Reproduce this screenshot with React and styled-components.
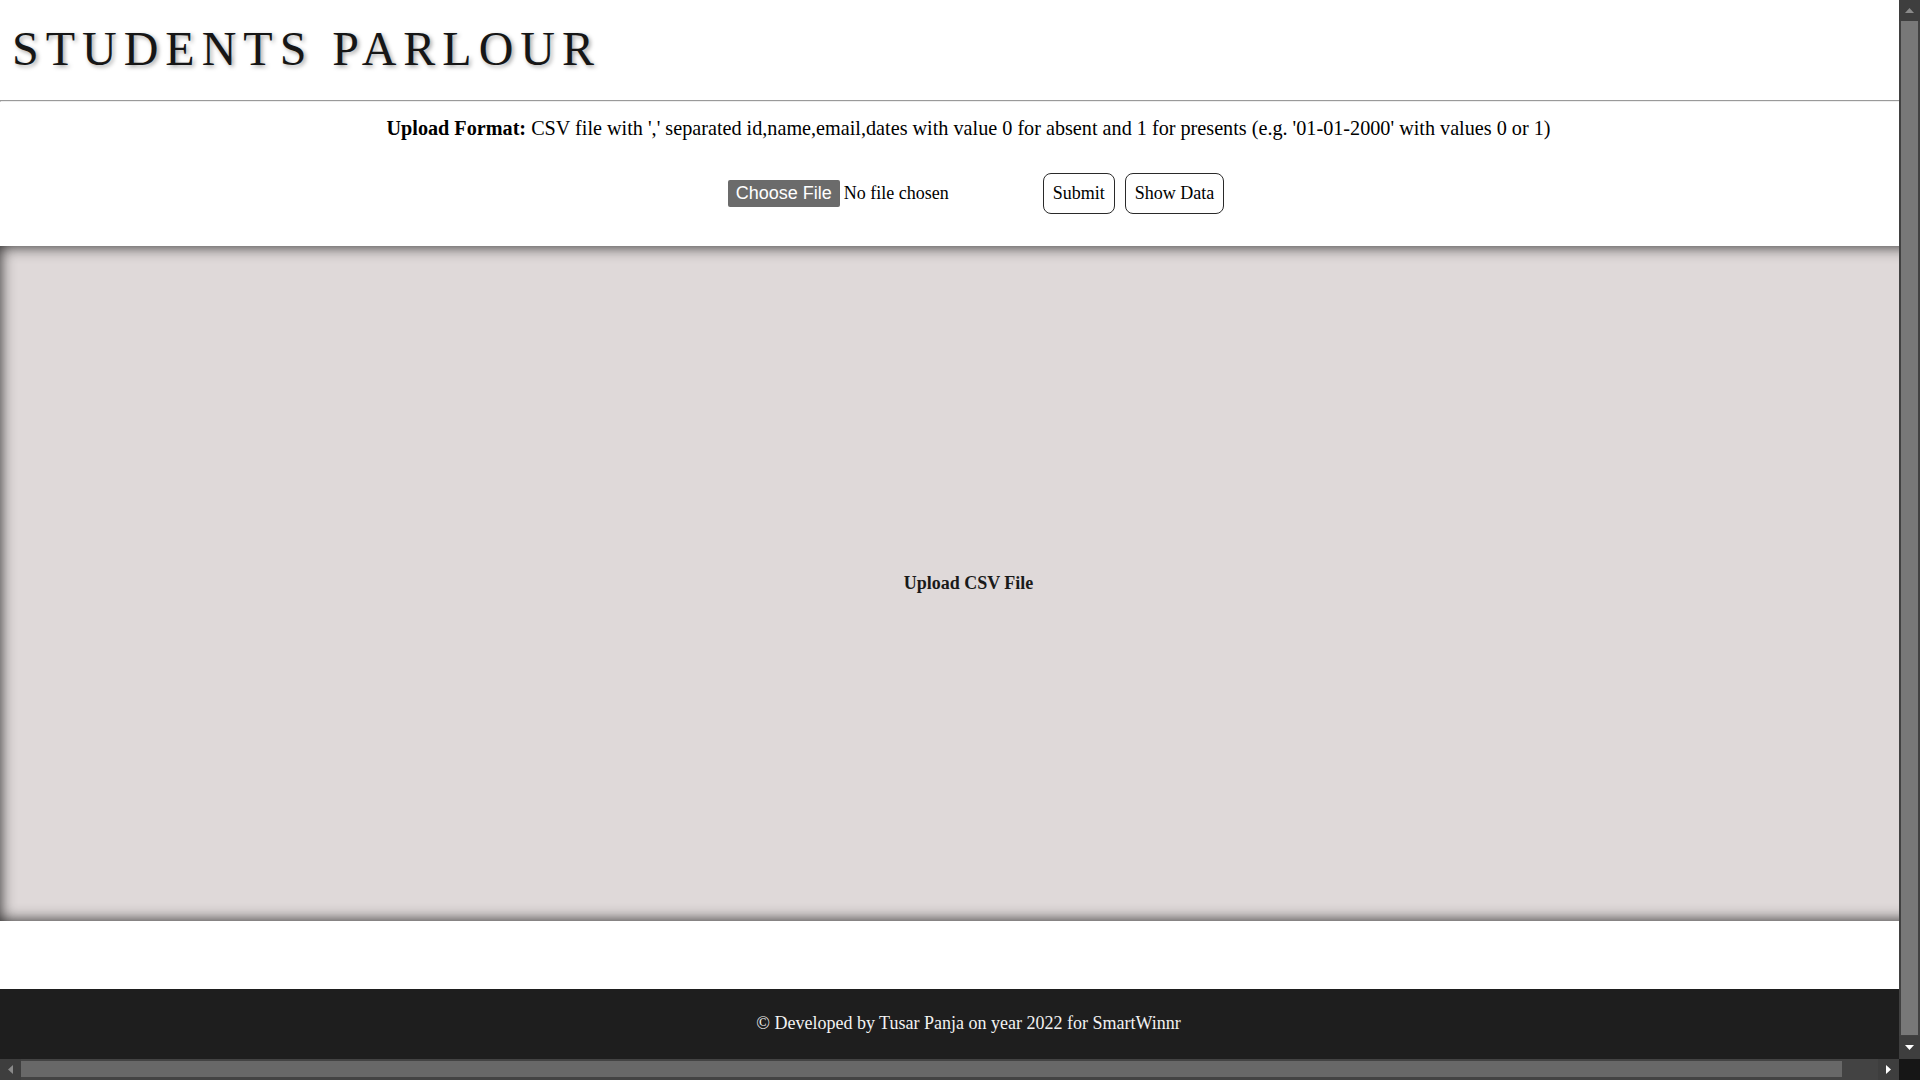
import React from 'react';
import styled, { createGlobalStyle } from 'styled-components';

const GlobalStyle = createGlobalStyle`
  html, body {
    margin: 0;
    padding: 0;
    background: #ffffff;
    overflow: hidden;
  }
  body {
    font-family: "Liberation Serif", "Times New Roman", serif;
    color: #000;
  }
`;

/* Window frame: content pane plus the browser-style scrollbars */
const Frame = styled.div`
  width: 100vw;
  height: 100vh;
  display: grid;
  grid-template-columns: 1fr 21px;
  grid-template-rows: 1fr 21px;
`;

const Pane = styled.div`
  overflow: hidden;
  min-width: 0;
  min-height: 0;
`;

const VBar = styled.div`
  display: flex;
  flex-direction: column;
  background: #414141;
`;

const HBar = styled.div`
  display: flex;
  background: #434343;
`;

const Corner = styled.div`
  background: #161616;
`;

const BarButton = styled.div`
  flex: 0 0 ${(p) => p.$size}px;
  display: flex;
  align-items: center;
  justify-content: center;
  background: #3e3e3e;
`;

const VTrack = styled.div`
  flex: 1;
  display: flex;
  flex-direction: column;
  padding: 0 2px 1px;
`;

const HTrack = styled.div`
  flex: 1;
  display: flex;
  padding: 2px 0 3px;
`;

const Thumb = styled.div`
  background: ${(p) => p.$color};
  flex: ${(p) => p.$flex};
`;

const Arrow = ({ dir, color }) => {
  const shapes = {
    up: { w: 9, h: 5, pts: '4.5,0 9,5 0,5' },
    down: { w: 9, h: 5, pts: '0,0 9,0 4.5,5' },
    left: { w: 5, h: 9, pts: '5,0 5,9 0,4.5' },
    right: { w: 5, h: 9, pts: '0,0 5,4.5 0,9' },
  };
  const s = shapes[dir];
  return (
    <svg width={s.w} height={s.h} viewBox={`0 0 ${s.w} ${s.h}`}>
      <polygon points={s.pts} fill={color} />
    </svg>
  );
};

const Page = styled.div`
  width: 1937px;
`;

const Header = styled.header`
  padding: 21px 0 24px 12px;
`;

const Title = styled.h1`
  margin: 0;
  font-size: 48px;
  line-height: 55px;
  font-weight: 400;
  letter-spacing: 7px;
  color: #161616;
  text-shadow: 2px 2px 4px rgba(0, 0, 0, 0.35);
`;

const Rule = styled.hr`
  margin: 0;
`;

const UploadSection = styled.section`
  padding: 15px 0 32px;
  text-align: center;
`;

const FormatNote = styled.p`
  margin: 0;
  font-size: 20.2px;
  line-height: 23px;
`;

const Controls = styled.form`
  display: flex;
  justify-content: center;
  align-items: center;
  gap: 10px;
  margin-top: 33px;
  padding-left: 15px;
`;

const FileInput = styled.input`
  width: 305px;
  font-family: "Liberation Serif", "Times New Roman", serif;
  font-size: 18px;
  color: #000;

  &::file-selector-button {
    font-family: "Liberation Sans", Arial, sans-serif;
    font-size: 18px;
    color: #ffffff;
    background: #6b6b6b;
    border: none;
    border-radius: 2px;
    padding: 3px 8px;
    margin-right: 4px;
  }
`;

const ActionButton = styled.button`
  font-family: "Liberation Serif", "Times New Roman", serif;
  font-size: 18px;
  line-height: 21px;
  padding: 9px 9px;
  background: #ffffff;
  color: #000;
  border: 1px solid #2a2a2a;
  border-radius: 8px;
`;

const Stage = styled.main`
  height: 675px;
  margin-bottom: 68px;
  background: #dfd9d9;
  box-shadow: inset 0 0 15px rgba(0, 0, 0, 0.85);
  display: flex;
  align-items: center;
  justify-content: center;
  font-size: 18px;
  font-weight: 700;
  color: #1a1a1a;
`;

const Footer = styled.footer`
  box-sizing: border-box;
  height: 72px;
  padding-top: 24px;
  background: #1e1e1e;
  color: #f2f2f2;
  text-align: center;
  font-size: 18px;
  line-height: 21px;
`;

export default function App() {
  return (
    <>
      <GlobalStyle />
      <Frame>
        <Pane>
          <Page>
            <Header>
              <Title>STUDENTS PARLOUR</Title>
            </Header>
            <Rule />
            <UploadSection>
              <FormatNote>
                <b>Upload Format:</b> CSV file with ',' separated id,name,email,dates with value 0 for absent and 1 for presents (e.g. '01-01-2000' with values 0 or 1)
              </FormatNote>
              <Controls onSubmit={(e) => e.preventDefault()}>
                <FileInput type="file" accept=".csv" />
                <ActionButton type="submit">Submit</ActionButton>
                <ActionButton type="button">Show Data</ActionButton>
              </Controls>
            </UploadSection>
            <Stage>Upload CSV File</Stage>
            <Footer>© Developed by Tusar Panja on year 2022 for SmartWinnr</Footer>
          </Page>
        </Pane>
        <VBar>
          <BarButton $size={21}>
            <Arrow dir="up" color="#8a8a8a" />
          </BarButton>
          <VTrack>
            <Thumb $color="#787878" $flex="1" />
          </VTrack>
          <BarButton $size={23}>
            <Arrow dir="down" color="#ffffff" />
          </BarButton>
        </VBar>
        <HBar>
          <BarButton $size={21}>
            <Arrow dir="left" color="#8a8a8a" />
          </BarButton>
          <HTrack>
            <Thumb $color="#686868" $flex="0 0 98.06%" />
          </HTrack>
          <BarButton $size={21}>
            <Arrow dir="right" color="#ffffff" />
          </BarButton>
        </HBar>
        <Corner />
      </Frame>
    </>
  );
}
